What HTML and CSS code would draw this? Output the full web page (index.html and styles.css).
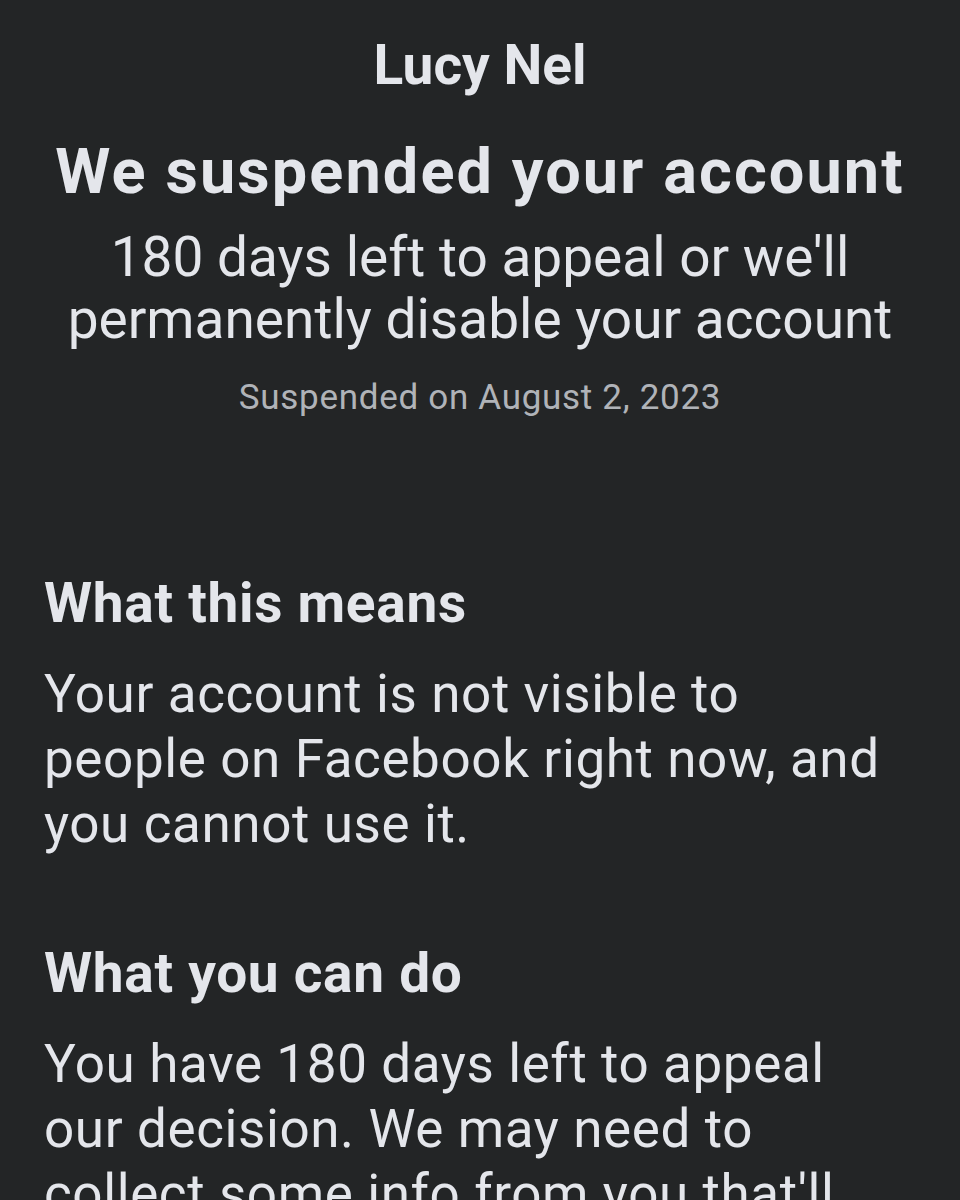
FILE: index.html
```html
<!DOCTYPE html>
<html lang="en">
<head>
<meta charset="utf-8">
<title>We suspended your account</title>
<link rel="stylesheet" href="styles.css">
</head>
<body>
<main class="page">
  <header class="intro">
    <div class="name">Lucy Nel</div>
    <h1 class="title">We suspended your account</h1>
    <p class="subtitle">180 days left to appeal or we'll<br>permanently disable your account</p>
    <p class="date">Suspended on August 2, 2023</p>
  </header>
  <section class="block block-first">
    <h2 class="heading">What this means</h2>
    <p class="body">Your account is not visible to people on Facebook right now, and you cannot use it.</p>
  </section>
  <section class="block">
    <h2 class="heading">What you can do</h2>
    <p class="body">You have 180 days left to appeal our decision. We may need to collect some info from you that'll help us confirm it's you.</p>
  </section>
</main>
</body>
</html>
```

FILE: styles.css
```css
html, body {
  margin: 0;
  padding: 0;
  background: #232526;
}
body {
  font-family: Roboto, "Noto Sans", sans-serif;
  color: #e4e6eb;
  height: 1200px;
  overflow: hidden;
}
.intro {
  display: flex;
  flex-direction: column;
  align-items: center;
  text-align: center;
  padding: 32px 40px 0;
}
.name {
  font-size: 55px;
  font-weight: 700;
  line-height: 66px;
}
.title {
  margin: 38px 0 0;
  font-size: 63px;
  font-weight: 700;
  line-height: 72px;
  letter-spacing: 2.1px;
  white-space: nowrap;
}
.subtitle {
  margin: 18px 0 0;
  font-size: 55px;
  line-height: 62px;
  font-weight: 400;
}
.date {
  margin: 26px 0 0;
  font-size: 35px;
  line-height: 44px;
  letter-spacing: 0.7px;
  color: #b0b3b8;
}
.block {
  padding: 0 56px 0 44px;
  margin-top: 83px;
}
.block-first {
  margin-top: 150px;
}
.heading {
  margin: 0;
  font-size: 55px;
  font-weight: 700;
  line-height: 66px;
  letter-spacing: 0.7px;
}
.body {
  margin: 26px 0 0;
  font-size: 53px;
  line-height: 65px;
  font-weight: 400;
  letter-spacing: 0.6px;
}
```
